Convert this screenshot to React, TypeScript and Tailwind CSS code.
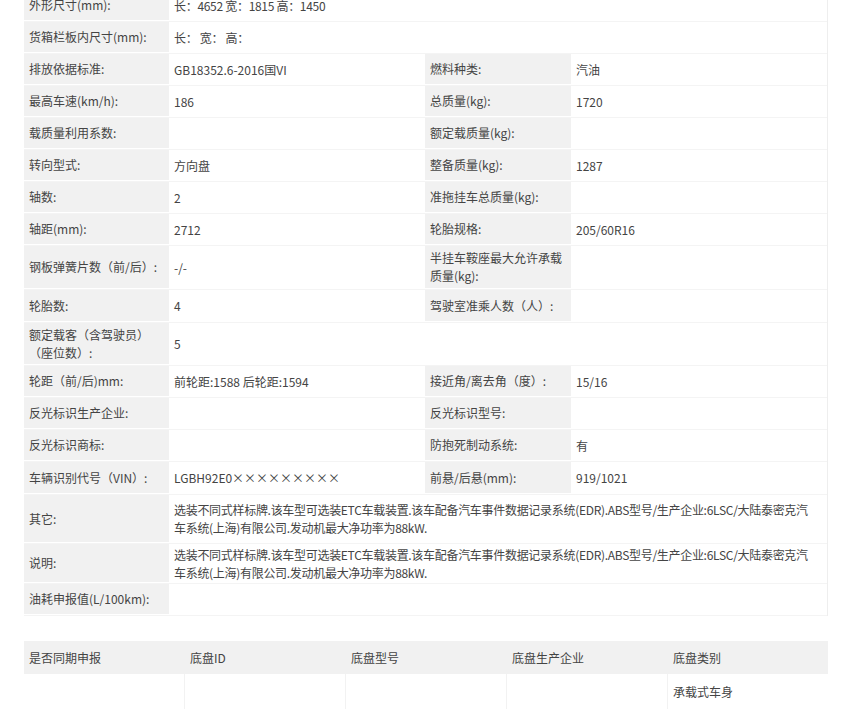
const F = { fontFamily: '"Noto Sans CJK SC","Noto Sans",sans-serif' };

type Row = { h: number; l1: React.ReactNode; v1?: React.ReactNode; l2?: React.ReactNode; v2?: React.ReactNode; full?: boolean };

const rows: Row[] = [
  { h: 32, l1: "外形尺寸(mm):", v1: "长：4652 宽：1815 高：1450", full: true },
  { h: 32, l1: "货箱栏板内尺寸(mm):", v1: "长： 宽： 高：", full: true },
  { h: 32, l1: "排放依据标准:", v1: "GB18352.6-2016国VI", l2: "燃料种类:", v2: "汽油" },
  { h: 32, l1: "最高车速(km/h):", v1: "186", l2: "总质量(kg):", v2: "1720" },
  { h: 32, l1: "载质量利用系数:", v1: "", l2: "额定载质量(kg):", v2: "" },
  { h: 32, l1: "转向型式:", v1: "方向盘", l2: "整备质量(kg):", v2: "1287" },
  { h: 32, l1: "轴数:", v1: "2", l2: "准拖挂车总质量(kg):", v2: "" },
  { h: 32, l1: "轴距(mm):", v1: "2712", l2: "轮胎规格:", v2: "205/60R16" },
  { h: 44, l1: "钢板弹簧片数（前/后）:", v1: "-/-", l2: <>半挂车鞍座最大允许承载<br />质量(kg):</>, v2: "" },
  { h: 33, l1: "轮胎数:", v1: "4", l2: "驾驶室准乘人数（人）:", v2: "" },
  { h: 43, l1: <>额定载客（含驾驶员）<br />（座位数）:</>, v1: "5", full: true },
  { h: 32, l1: "轮距（前/后)mm:", v1: "前轮距:1588 后轮距:1594", l2: "接近角/离去角（度）:", v2: "15/16" },
  { h: 32, l1: "反光标识生产企业:", v1: "", l2: "反光标识型号:", v2: "" },
  { h: 32, l1: "反光标识商标:", v1: "", l2: "防抱死制动系统:", v2: "有" },
  { h: 33, l1: "车辆识别代号（VIN）:", v1: "LGBH92E0×××××××××", l2: "前悬/后悬(mm):", v2: "919/1021" },
  { h: 49, l1: "其它:", v1: <>选装不同式样标牌.该车型可选装ETC车载装置.该车配备汽车事件数据记录系统(EDR).ABS型号/生产企业:6LSC/大陆泰密克汽<br />车系统(上海)有限公司.发动机最大净功率为88kW.</>, full: true },
  { h: 40, l1: "说明:", v1: <>选装不同式样标牌.该车型可选装ETC车载装置.该车配备汽车事件数据记录系统(EDR).ABS型号/生产企业:6LSC/大陆泰密克汽<br />车系统(上海)有限公司.发动机最大净功率为88kW.</>, full: true },
  { h: 32, l1: "油耗申报值(L/100km):", v1: "", full: true },
];

export default function App() {
  return (
    <div style={F} className="w-[852px] h-[709px] overflow-hidden bg-white text-[12px] leading-[18px] text-[#444]">
      <div className="mx-[24px] mt-[-10px] w-[804px] border-r border-[#eee]">
        {rows.map((r, i) => (
          <div key={i} className="flex border-b border-[#f4f4f4]" style={{ height: r.h }}>
            <div className="w-[145px] shrink-0 bg-[#f1f1f1] flex items-center px-[5px] border-b border-white">{r.l1}</div>
            {r.full ? (
              <div className="flex-1 flex items-center px-[5px] tracking-[-0.3px]">{r.v1}</div>
            ) : (
              <>
                <div className="w-[256px] shrink-0 flex items-center px-[5px]">{r.v1}</div>
                <div className="w-[146px] shrink-0 bg-[#f1f1f1] flex items-center px-[5px] border-b border-white">{r.l2}</div>
                <div className="flex-1 flex items-center px-[5px]">{r.v2}</div>
              </>
            )}
          </div>
        ))}
      </div>
      <div className="mx-[24px] mt-[25px] w-[804px]">
        <div className="flex h-[33px] bg-[#f1f1f1] items-center">
          {["是否同期申报", "底盘ID", "底盘型号", "底盘生产企业", "底盘类别"].map((t, i) => (
            <div key={i} className={`${i === 4 ? "flex-1" : "w-[161px]"} px-[5px]`}>{t}</div>
          ))}
        </div>
        <div className="flex h-[36px] items-center">
          {["", "", "", "", "承载式车身"].map((t, i) => (
            <div key={i} className={`${i === 4 ? "flex-1" : "w-[161px] border-r border-[#f2f2f2]"} h-full flex items-center px-[5px]`}>{t}</div>
          ))}
        </div>
      </div>
    </div>
  );
}
